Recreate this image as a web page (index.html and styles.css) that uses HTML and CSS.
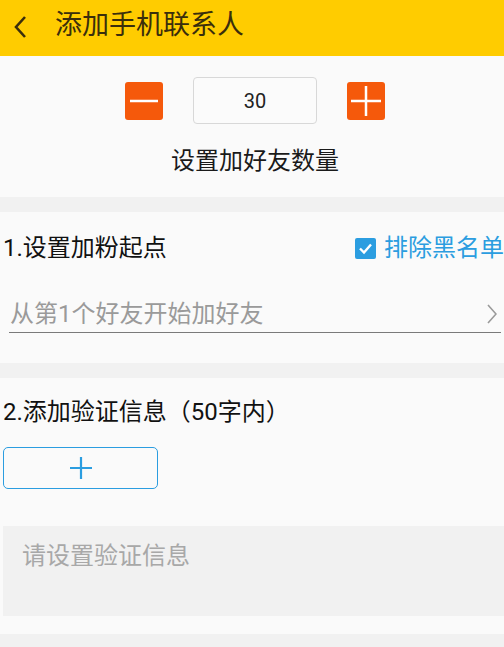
FILE: index.html
```html
<!DOCTYPE html>
<html lang="zh-CN">
<head>
    <meta charset="UTF-8">
    <meta name="viewport" content="width=device-width, initial-scale=1.0">
    <title>添加手机联系人</title>
    <link rel="stylesheet" href="styles.css">
</head>
<body>
    <header class="topbar">
        <svg class="back" width="14" height="24" viewBox="0 0 14 24">
            <path d="M12 2 L3 12 L12 22" fill="none" stroke="#3a2e0c" stroke-width="2.6"/>
        </svg>
        <h1 class="title">添加手机联系人</h1>
    </header>

    <section class="panel count">
        <div class="stepper">
            <button class="step-btn" aria-label="减少">
                <svg width="38" height="38" viewBox="0 0 38 38">
                    <path d="M5 19 H33" stroke="#fff" stroke-width="2.5"/>
                </svg>
            </button>
            <div class="count-box">30</div>
            <button class="step-btn" aria-label="增加">
                <svg width="38" height="38" viewBox="0 0 38 38">
                    <path d="M4 19 H34 M19 4 V34" stroke="#fff" stroke-width="2.5"/>
                </svg>
            </button>
        </div>
        <div class="count-label">设置加好友数量</div>
    </section>

    <section class="panel start">
        <div class="row-head">
            <div class="heading">1.设置加粉起点</div>
            <label class="blacklist">
                <span class="check">
                    <svg width="21" height="21" viewBox="0 0 21 21">
                        <path d="M5 10.5 L9 14.5 L16 6.5" fill="none" stroke="#fff" stroke-width="2.4"/>
                    </svg>
                </span>
                排除黑名单
            </label>
        </div>
        <div class="picker">
            <span class="picker-text">从第1个好友开始加好友</span>
            <svg class="chevron" width="10" height="20" viewBox="0 0 10 20">
                <path d="M1 1 L9 10 L1 19" fill="none" stroke="#9a9a9a" stroke-width="1.6"/>
            </svg>
        </div>
    </section>

    <section class="panel verify">
        <div class="heading">2.添加验证信息（50字内）</div>
        <button class="add-btn" aria-label="添加">
            <svg width="24" height="24" viewBox="0 0 24 24">
                <path d="M1 12 H23 M12 1 V23" stroke="#2b9de0" stroke-width="2.2"/>
            </svg>
        </button>
        <div class="message">请设置验证信息</div>
    </section>
</body>
</html>
```

FILE: styles.css
```css
body {
    margin: 0;
    background-color: #f1f1f1;
    font-family: Roboto, "Noto Sans CJK SC", sans-serif;
    color: #1a1a1a;
}

.topbar {
    height: 56px;
    background-color: #ffcc00;
    display: flex;
    align-items: center;
    padding-left: 13px;
}

.back {
    margin-top: -2px;
}

.title {
    margin: -6px 0 0 28px;
    font-size: 27px;
    font-weight: normal;
    color: #3a2e0c;
    line-height: 30px;
}

.panel {
    background-color: #fafafa;
    margin-bottom: 15px;
}

button {
    padding: 0;
    border: none;
    background: none;
    cursor: pointer;
}

/* count */
.count {
    padding: 21px 0 21px;
}

.stepper {
    display: flex;
    align-items: center;
    justify-content: center;
    padding-left: 6px;
}

.step-btn {
    width: 38px;
    height: 38px;
    background-color: #f5590b;
    border-radius: 3px;
    display: flex;
}

.count-box {
    width: 122px;
    height: 45px;
    margin: 0 30px 0 30px;
    border: 1px solid #d8d8d8;
    border-radius: 4px;
    background-color: #fbfbfb;
    display: flex;
    align-items: center;
    justify-content: center;
    font-size: 20px;
    color: #222;
}

.count-label {
    margin-top: 22px;
    text-align: center;
    font-size: 24px;
    line-height: 30px;
    padding-left: 6px;
}

/* start point */
.start {
    padding: 21px 0 30px;
}

.row-head {
    display: flex;
    align-items: center;
    padding-left: 3px;
}

.heading {
    font-size: 24px;
    line-height: 30px;
    color: #111;
}

.blacklist {
    margin-left: auto;
    display: flex;
    align-items: center;
    flex-shrink: 0;
    white-space: nowrap;
    font-size: 24px;
    line-height: 30px;
    color: #2b9de0;
}

.check {
    width: 21px;
    height: 21px;
    margin-right: 8px;
    background-color: #2b9de0;
    border-radius: 2px;
    display: flex;
}

.picker {
    display: flex;
    align-items: center;
    justify-content: space-between;
    margin: 36px 3px 0 9px;
    padding: 0 4px 3px 1px;
    border-bottom: 1px solid #7a7a7a;
}

.picker-text {
    font-size: 24px;
    line-height: 30px;
    color: #9a9a9a;
}

/* verify message */
.verify {
    padding: 19px 0 18px;
}

.verify .heading {
    padding-left: 3px;
}

.add-btn {
    display: flex;
    align-items: center;
    justify-content: center;
    width: 155px;
    height: 42px;
    margin: 20px 0 0 3px;
    border: 1.5px solid #2b9de0;
    border-radius: 5px;
    box-sizing: border-box;
}

.message {
    margin: 37px 0 0 3px;
    height: 90px;
    box-sizing: border-box;
    padding: 15px 19px;
    background-color: #f1f1f1;
    font-size: 24px;
    line-height: 30px;
    color: #a8a8a8;
}
```
